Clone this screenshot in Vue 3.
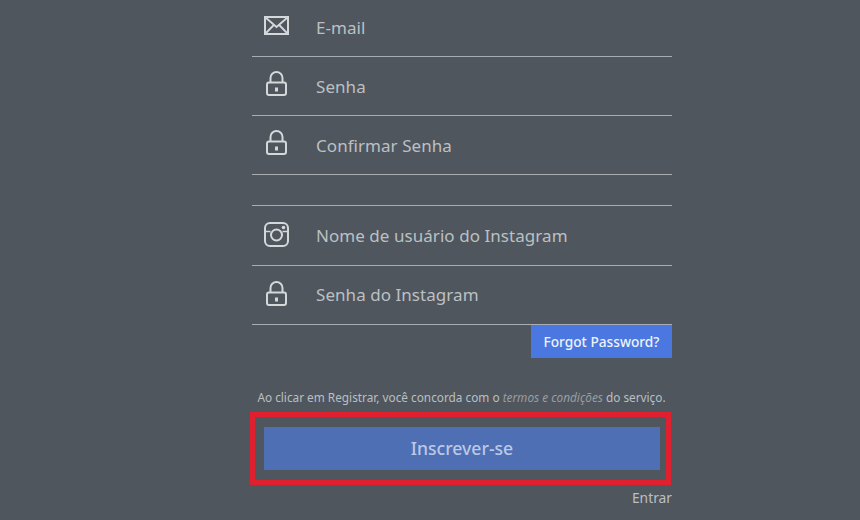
<script setup>
const rowsA = [
  { label: 'E-mail', icon: 'mail' },
  { label: 'Senha', icon: 'lock' },
  { label: 'Confirmar Senha', icon: 'lock' },
]
const rowsB = [
  { label: 'Nome de usuário do Instagram', icon: 'insta' },
  { label: 'Senha do Instagram', icon: 'lock' },
]
</script>

<template>
  <div class="page">
    <form class="form" @submit.prevent>
      <div class="group first">
        <div v-for="r in rowsA" :key="r.label" class="row">
          <span class="icon">
            <svg v-if="r.icon === 'mail'" width="25" height="19" viewBox="0 0 25 19" fill="none" stroke="#d5d8da" stroke-width="2">
              <rect x="1" y="1" width="23" height="17" />
              <path d="M1.500 1.500 12.500 11 23.500 1.500M1.500 17.500l8.300-8.500M23.500 17.500 15.200 9" stroke-width="1.800" />
            </svg>
            <svg v-else width="21" height="25" viewBox="0 0 21 25" fill="none" stroke="#d5d8da" stroke-width="2">
              <rect x="1" y="11.500" width="19" height="12.500" rx="2" />
              <path d="M4.500 11.500V7a6 6 0 0 1 12 0v4.500" />
              <path d="M10.500 16.500v4" stroke-width="3" />
            </svg>
          </span>
          <span class="label">{{ r.label }}</span>
        </div>
      </div>
      <div class="group second">
        <div v-for="r in rowsB" :key="r.label" class="row">
          <span class="icon">
            <svg v-if="r.icon === 'insta'" width="25" height="25" viewBox="0 0 25 25" fill="none" stroke="#d5d8da" stroke-width="2">
              <rect x="1" y="1" width="23" height="23" rx="5" />
              <circle cx="12.500" cy="13" r="5.500" />
              <circle cx="19.500" cy="5.500" r="1.800" fill="#d5d8da" stroke="none" />
              <path d="M1 9.500h5.500M18.500 9.500H24" stroke-width="1.500" />
            </svg>
            <svg v-else width="21" height="25" viewBox="0 0 21 25" fill="none" stroke="#d5d8da" stroke-width="2">
              <rect x="1" y="11.500" width="19" height="12.500" rx="2" />
              <path d="M4.500 11.500V7a6 6 0 0 1 12 0v4.500" />
              <path d="M10.500 16.500v4" stroke-width="3" />
            </svg>
          </span>
          <span class="label">{{ r.label }}</span>
        </div>
      </div>
      <div class="forgot-wrap">
        <button type="button" class="forgot">Forgot Password?</button>
      </div>
      <p class="terms">Ao clicar em Registrar, você concorda com o <em>termos e condições</em> do serviço.</p>
      <div class="highlight">
        <button type="submit" class="submit">Inscrever-se</button>
      </div>
      <a class="enter">Entrar</a>
    </form>
  </div>
</template>

<style scoped>
.page {
  width: 860px;
  height: 520px;
  overflow: hidden;
  background: #4f565e;
  font-family: "Noto Sans", "Open Sans", sans-serif;
}
.form {
  width: 420px;
  margin-left: 252px;
  display: flex;
  flex-direction: column;
}
.group {
  display: flex;
  flex-direction: column;
}
.row {
  height: 58px;
  border-bottom: 1px solid #a9adb1;
  display: flex;
  align-items: center;
}
.first .row:first-child {
  height: 56px;
  padding-bottom: 2px;
  box-sizing: border-box;
  height: 57px;
  border-bottom-width: 1px;
}
.second {
  margin-top: 30px;
  border-top: 1px solid #a9adb1;
}
.second .row {
  height: 58.500px;
}
.icon {
  width: 48px;
  margin-right: 16px;
  margin-bottom: 5px;
  display: flex;
  justify-content: center;
  align-items: center;
  flex: none;
}
.first .row:first-child .icon {
  margin-bottom: 3px;
}
.second .icon {
  margin-bottom: 2px;
}
.label {
  color: #bcc0c3;
  font-size: 17px;
  letter-spacing: 0.050px;
}
.forgot-wrap {
  display: flex;
  justify-content: flex-end;
}
.forgot {
  width: 141px;
  height: 33px;
  padding: 0;
  border: none;
  background: #4a78e0;
  color: #eef2fa;
  font-family: inherit;
  font-size: 13.700px;
  font-weight: 500;
}
.terms {
  margin: 31px 0 0;
  color: #bcbfc2;
  font-size: 11.800px;
  line-height: 16px;
  text-align: center;
  padding-right: 1px;
  white-space: nowrap;
}
.terms em {
  color: #9a9ea2;
}
.highlight {
  width: 421px;
  height: 73px;
  margin: 7px 0 0 -2px;
  box-sizing: border-box;
  border: 5px solid #e0202f;
  padding: 10px 6px 10px 9px;
  display: flex;
}
.submit {
  flex: 1;
  border: none;
  padding: 0 0 2px;
  background: #4f6fb5;
  color: #bcc9e4;
  font-family: inherit;
  font-size: 17.600px;
  font-weight: 500;
}
.enter {
  margin-top: 3px;
  text-align: right;
  color: #bcbfc2;
  font-size: 13.800px;
  line-height: 20px;
}
</style>
